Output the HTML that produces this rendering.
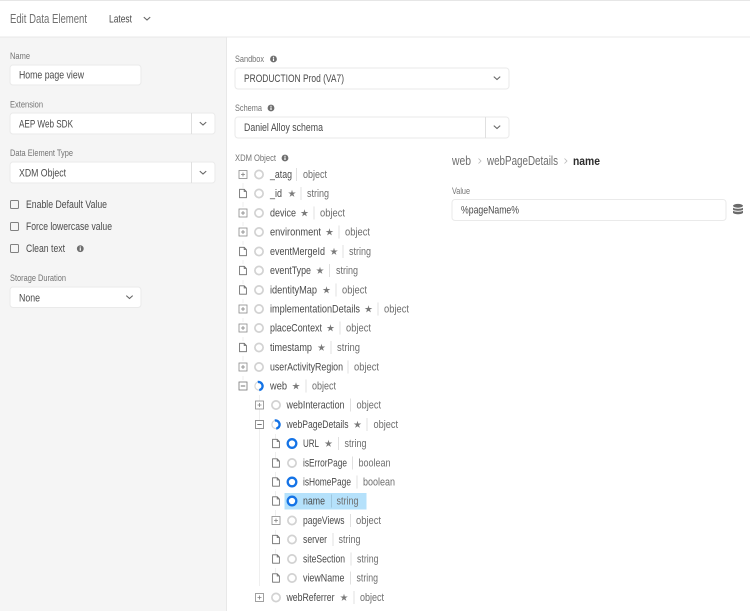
<!DOCTYPE html>
<html><head><meta charset="utf-8"><style>
html,body{margin:0;padding:0;background:#fff;width:750px;height:611px;overflow:hidden}
svg{display:block;filter:blur(.35px)}
text{font-family:"Liberation Sans",sans-serif}
.l{font-size:9.2px;fill:#747474}
.v{font-size:11.4px;fill:#4b4b4b}
.n{font-size:11.4px;fill:#4b4b4b}
.t{font-size:11.4px;fill:#6e6e6e}
.f{fill:#fff;stroke:#eaeaea;stroke-width:1}
.d{stroke:#e0e0e0;stroke-width:1}
</style></head><body>
<svg xmlns="http://www.w3.org/2000/svg" width="750" height="611" viewBox="0 0 750 611">
<defs>
<g id="plus"><rect x="-4" y="-4" width="8" height="8" fill="#fff" stroke="#8a8a8a" stroke-width=".8"/><path d="M-2 0H2M0-2V2" stroke="#808080" stroke-width=".8"/></g>
<g id="minus"><rect x="-4" y="-4" width="8" height="8" fill="#fff" stroke="#777" stroke-width=".8"/><path d="M-2.2 0H2.2" stroke="#666" stroke-width=".9"/></g>
<g id="file"><path d="M-3.4-4.2H1.2L3.4-2V4.2H-3.4Z M1.2-4.2V-2H3.4" fill="#fff" stroke="#6a6a6a" stroke-width=".85"/></g>
<circle id="o" r="4.1" fill="#fff" stroke="#d2d2d2" stroke-width="1.7"/>
<circle id="b" r="4.3" fill="#fff" stroke="#1473e6" stroke-width="2.3"/>
<g id="h"><circle r="4.1" fill="#fff" stroke="#d8d8d8" stroke-width="1.2"/><path d="M-.5-4.1A4.1 4.1 0 0 1 -.5 4.1" transform="rotate(-10)" fill="none" stroke="#1473e6" stroke-width="2.4"/></g>
<path id="s" d="M0-3.8L.8-1L3.8-1L1.4 .6L2.4 3.4L0 1.7L-2.4 3.4L-1.4 .6L-3.8-1L-.8-1Z" fill="#7a7a7a"/>
<g id="i"><circle r="3.4" fill="#6e6e6e"/><rect x="-.6" y="-.6" width="1.2" height="2.6" fill="#fff"/><rect x="-.6" y="-2.2" width="1.2" height="1.1" fill="#fff"/></g>
<path id="c" d="M-3.2-1.4L0 1.5L3.2-1.4" fill="none" stroke="#666" stroke-width="1.1"/>
</defs>

<rect width="750" height="611" fill="#fff"/>
<rect x="0" y="0" width="750" height="1" fill="#e6e6e6"/>
<rect x="0" y="37" width="226" height="574" fill="#f5f5f5"/>
<rect x="226" y="37" width="1" height="574" fill="#e8e8e8"/>
<rect x="0" y="36.5" width="750" height="1" fill="#e8e8e8"/>

<text x="10" y="23" font-size="13" fill="#707070" textLength="77" lengthAdjust="spacingAndGlyphs">Edit Data Element</text>
<text x="109" y="22.5" font-size="11" fill="#4b4b4b" textLength="23" lengthAdjust="spacingAndGlyphs">Latest</text>
<use href="#c" x="147" y="18.5"/>

<text class="l" x="10" y="59" textLength="20" lengthAdjust="spacingAndGlyphs">Name</text>
<rect class="f" x="10" y="65" width="131" height="20" rx="3"/>
<text class="v" x="19" y="78.5" textLength="65" lengthAdjust="spacingAndGlyphs">Home page view</text>

<text class="l" x="10" y="107.5" textLength="33" lengthAdjust="spacingAndGlyphs">Extension</text>
<rect class="f" x="10" y="113" width="205" height="21" rx="3"/>
<path class="d" d="M191.5 113V134"/>
<text class="v" x="19" y="127.5" textLength="54" lengthAdjust="spacingAndGlyphs">AEP Web SDK</text>
<use href="#c" x="203" y="123.5"/>

<text class="l" x="10" y="156" textLength="63" lengthAdjust="spacingAndGlyphs">Data Element Type</text>
<rect class="f" x="10" y="162" width="205" height="21" rx="3"/>
<path class="d" d="M191.5 162V183"/>
<text class="v" x="19" y="176.5" textLength="47" lengthAdjust="spacingAndGlyphs">XDM Object</text>
<use href="#c" x="203" y="172.5"/>

<rect x="10.5" y="200.5" width="8" height="8" rx="1" fill="#f5f5f5" stroke="#808080" stroke-width="1"/>
<text class="v" x="26" y="208" textLength="81" lengthAdjust="spacingAndGlyphs">Enable Default Value</text>
<rect x="10.5" y="222.5" width="8" height="8" rx="1" fill="#f5f5f5" stroke="#808080" stroke-width="1"/>
<text class="v" x="26" y="230" textLength="86" lengthAdjust="spacingAndGlyphs">Force lowercase value</text>
<rect x="10.5" y="244.5" width="8" height="8" rx="1" fill="#f5f5f5" stroke="#808080" stroke-width="1"/>
<text class="v" x="26" y="252" textLength="39" lengthAdjust="spacingAndGlyphs">Clean text</text>
<use href="#i" x="80.3" y="248.7"/>

<text class="l" x="10" y="281" textLength="56" lengthAdjust="spacingAndGlyphs">Storage Duration</text>
<rect class="f" x="10" y="287" width="131" height="20.5" rx="3"/>
<text class="v" x="19" y="301.5" textLength="21" lengthAdjust="spacingAndGlyphs">None</text>
<use href="#c" x="129.5" y="297"/>

<text class="l" x="235" y="62" textLength="29" lengthAdjust="spacingAndGlyphs">Sandbox</text>
<use href="#i" x="273.5" y="59"/>
<rect class="f" x="235" y="68" width="274" height="21" rx="3"/>
<text class="v" x="244" y="82" textLength="100" lengthAdjust="spacingAndGlyphs">PRODUCTION Prod (VA7)</text>
<use href="#c" x="497" y="78"/>

<text class="l" x="235" y="111" textLength="27" lengthAdjust="spacingAndGlyphs">Schema</text>
<use href="#i" x="271" y="108"/>
<rect class="f" x="235" y="117" width="274" height="21" rx="3"/>
<path class="d" d="M485.5 117V138"/>
<text class="v" x="244" y="131" textLength="79" lengthAdjust="spacingAndGlyphs">Daniel Alloy schema</text>
<use href="#c" x="497" y="127"/>

<text class="l" x="235" y="161" textLength="41" lengthAdjust="spacingAndGlyphs">XDM Object</text>
<use href="#i" x="285" y="158"/>

<text x="452" y="165" font-size="12.5" fill="#6e6e6e" textLength="19" lengthAdjust="spacingAndGlyphs">web</text>
<path d="M478.5 158.5L481 161L478.5 163.5" fill="none" stroke="#b8b8b8" stroke-width=".8"/>
<text x="487" y="165" font-size="12.5" fill="#6e6e6e" textLength="71" lengthAdjust="spacingAndGlyphs">webPageDetails</text>
<path d="M564.5 158.500L567 161L564.5 163.5" fill="none" stroke="#b8b8b8" stroke-width=".8"/>
<text x="573" y="165" font-size="12" font-weight="bold" fill="#2c2c2c" textLength="27" lengthAdjust="spacingAndGlyphs">name</text>

<text class="l" x="452" y="194" textLength="18" lengthAdjust="spacingAndGlyphs">Value</text>
<rect class="f" x="452" y="199.5" width="274" height="21" rx="3"/>
<text class="v" x="461" y="213.5" textLength="58" lengthAdjust="spacingAndGlyphs">%pageName%</text>
<g fill="#6a6a6a"><ellipse cx="738" cy="205.8" rx="5" ry="1.9"/><path d="M733 207.600c1 1.500 9 1.500 10 0v2c-1 1.500-9 1.500-10 0z"/><path d="M733 210.600c1 1.500 9 1.500 10 0v2.200c-1 2-9 2-10 0z"/></g>

<!-- tree guides -->
<path d="M259.5 395V586M275.500 434V440M275.500 452V458M275.500 472V478M275.500 491V497M275.500 510V516M275.500 530V535M275.500 549V554M275.500 568V573M243 183V188M243 202V207M243 222V226M243 241V245M243 260V264M243 280V284M243 299V303M243 318V322M243 337V341M243 356V361M243 376V380" stroke="#efefef" stroke-width="1" fill="none"/>

<!-- highlight -->
<rect x="284.5" y="493" width="82" height="16.5" fill="#b5e1fb"/>

<!-- rows -->
<use href="#plus" x="243" y="174.5"/><use href="#o" x="259" y="174.5"/><text class="n" x="270" y="178" textLength="22" lengthAdjust="spacingAndGlyphs">_atag</text><path class="d" d="M296.5 168V181"/><text class="t" x="303" y="178" textLength="24" lengthAdjust="spacingAndGlyphs">object</text>

<use href="#file" x="243" y="193.5"/><use href="#o" x="259" y="193.5"/><text class="n" x="270" y="197" textLength="12" lengthAdjust="spacingAndGlyphs">_id</text><use href="#s" x="292" y="193.5"/><path class="d" d="M301 187V200"/><text class="t" x="307" y="197" textLength="22" lengthAdjust="spacingAndGlyphs">string</text>

<use href="#plus" x="243" y="213"/><use href="#o" x="259" y="213"/><text class="n" x="270" y="216.5" textLength="26" lengthAdjust="spacingAndGlyphs">device</text><use href="#s" x="304.5" y="213"/><path class="d" d="M314 206.5V219.5"/><text class="t" x="320" y="216.5" textLength="25" lengthAdjust="spacingAndGlyphs">object</text>

<use href="#plus" x="243" y="232"/><use href="#o" x="259" y="232"/><text class="n" x="270" y="235.5" textLength="51" lengthAdjust="spacingAndGlyphs">environment</text><use href="#s" x="329.5" y="232"/><path class="d" d="M339 225.5V238.5"/><text class="t" x="345" y="235.5" textLength="25" lengthAdjust="spacingAndGlyphs">object</text>

<use href="#file" x="243" y="251.5"/><use href="#o" x="259" y="251.5"/><text class="n" x="270" y="255" textLength="55" lengthAdjust="spacingAndGlyphs">eventMergeId</text><use href="#s" x="334" y="251.5"/><path class="d" d="M343 245V258"/><text class="t" x="349" y="255" textLength="22" lengthAdjust="spacingAndGlyphs">string</text>

<use href="#file" x="243" y="270.5"/><use href="#o" x="259" y="270.5"/><text class="n" x="270" y="274" textLength="41" lengthAdjust="spacingAndGlyphs">eventType</text><use href="#s" x="320" y="270.5"/><path class="d" d="M329.5 264V277"/><text class="t" x="336" y="274" textLength="22" lengthAdjust="spacingAndGlyphs">string</text>

<use href="#file" x="243" y="290"/><use href="#o" x="259" y="290"/><text class="n" x="270" y="293.5" textLength="47" lengthAdjust="spacingAndGlyphs">identityMap</text><use href="#s" x="326.5" y="290"/><path class="d" d="M336 283.5V296.5"/><text class="t" x="342" y="293.5" textLength="25" lengthAdjust="spacingAndGlyphs">object</text>

<use href="#plus" x="243" y="309"/><use href="#o" x="259" y="309"/><text class="n" x="270" y="312.5" textLength="90" lengthAdjust="spacingAndGlyphs">implementationDetails</text><use href="#s" x="368.5" y="309"/><path class="d" d="M378 302.5V315.5"/><text class="t" x="384" y="312.5" textLength="25" lengthAdjust="spacingAndGlyphs">object</text>

<use href="#plus" x="243" y="328"/><use href="#o" x="259" y="328"/><text class="n" x="270" y="331.5" textLength="52" lengthAdjust="spacingAndGlyphs">placeContext</text><use href="#s" x="330.5" y="328"/><path class="d" d="M340 321.5V334.5"/><text class="t" x="346" y="331.5" textLength="25" lengthAdjust="spacingAndGlyphs">object</text>

<use href="#file" x="243" y="347.5"/><use href="#o" x="259" y="347.5"/><text class="n" x="270" y="351" textLength="42" lengthAdjust="spacingAndGlyphs">timestamp</text><use href="#s" x="321.5" y="347.5"/><path class="d" d="M331 341V354"/><text class="t" x="337" y="351" textLength="23" lengthAdjust="spacingAndGlyphs">string</text>

<use href="#plus" x="243" y="367"/><use href="#o" x="259" y="367"/><text class="n" x="270" y="370.5" textLength="73" lengthAdjust="spacingAndGlyphs">userActivityRegion</text><path class="d" d="M348 360.5V373.5"/><text class="t" x="354" y="370.5" textLength="25" lengthAdjust="spacingAndGlyphs">object</text>

<use href="#minus" x="243" y="386"/><use href="#h" x="259" y="386"/><text class="n" x="270" y="389.5" textLength="17" lengthAdjust="spacingAndGlyphs">web</text><use href="#s" x="296" y="386"/><path class="d" d="M306 379.5V392.5"/><text class="t" x="312" y="389.5" textLength="24" lengthAdjust="spacingAndGlyphs">object</text>

<use href="#plus" x="259.5" y="405"/><use href="#o" x="276" y="405"/><text class="n" x="286.5" y="408.5" textLength="58" lengthAdjust="spacingAndGlyphs">webInteraction</text><path class="d" d="M350.5 398.5V411.5"/><text class="t" x="356.5" y="408.5" textLength="24.5" lengthAdjust="spacingAndGlyphs">object</text>

<use href="#minus" x="259.5" y="424.5"/><use href="#h" x="276" y="424.5"/><text class="n" x="286.5" y="428" textLength="62" lengthAdjust="spacingAndGlyphs">webPageDetails</text><use href="#s" x="357.5" y="424.5"/><path class="d" d="M367 418V431"/><text class="t" x="373.5" y="428" textLength="24.5" lengthAdjust="spacingAndGlyphs">object</text>

<use href="#file" x="276" y="443.5"/><use href="#b" x="292" y="443.5"/><text class="n" x="303" y="447" textLength="16" lengthAdjust="spacingAndGlyphs">URL</text><use href="#s" x="328.5" y="443.5"/><path class="d" d="M338.5 437V450"/><text class="t" x="344.5" y="447" textLength="22" lengthAdjust="spacingAndGlyphs">string</text>

<use href="#file" x="276" y="463"/><use href="#o" x="292" y="463"/><text class="n" x="303" y="466.5" textLength="44" lengthAdjust="spacingAndGlyphs">isErrorPage</text><path class="d" d="M352.5 456.5V469.5"/><text class="t" x="358.5" y="466.5" textLength="32" lengthAdjust="spacingAndGlyphs">boolean</text>

<use href="#file" x="276" y="482"/><use href="#b" x="292" y="482"/><text class="n" x="303" y="485.5" textLength="48" lengthAdjust="spacingAndGlyphs">isHomePage</text><path class="d" d="M357 475.5V488.5"/><text class="t" x="363" y="485.5" textLength="32" lengthAdjust="spacingAndGlyphs">boolean</text>

<use href="#file" x="276" y="501"/><use href="#b" x="292" y="501"/><text class="n" x="303" y="504.5" textLength="22" lengthAdjust="spacingAndGlyphs">name</text><path d="M331.5 494.5V507.5" stroke="#9fc6dd" stroke-width="1"/><text class="t" x="336.5" y="504.5" textLength="22" lengthAdjust="spacingAndGlyphs">string</text>

<use href="#plus" x="276" y="520.5"/><use href="#o" x="292" y="520.5"/><text class="n" x="303" y="524" textLength="41.5" lengthAdjust="spacingAndGlyphs">pageViews</text><path class="d" d="M350.5 514V527"/><text class="t" x="356" y="524" textLength="25" lengthAdjust="spacingAndGlyphs">object</text>

<use href="#file" x="276" y="539.5"/><use href="#o" x="292" y="539.5"/><text class="n" x="303" y="543" textLength="24" lengthAdjust="spacingAndGlyphs">server</text><path class="d" d="M333 533V546"/><text class="t" x="338.5" y="543" textLength="22" lengthAdjust="spacingAndGlyphs">string</text>

<use href="#file" x="276" y="559"/><use href="#o" x="292" y="559"/><text class="n" x="303" y="562.5" textLength="42" lengthAdjust="spacingAndGlyphs">siteSection</text><path class="d" d="M351 552.5V565.5"/><text class="t" x="357" y="562.5" textLength="21.5" lengthAdjust="spacingAndGlyphs">string</text>

<use href="#file" x="276" y="578"/><use href="#o" x="292" y="578"/><text class="n" x="303" y="581.5" textLength="41.5" lengthAdjust="spacingAndGlyphs">viewName</text><path class="d" d="M350.5 571.5V584.5"/><text class="t" x="356.5" y="581.5" textLength="21.5" lengthAdjust="spacingAndGlyphs">string</text>

<use href="#plus" x="259.5" y="597.5"/><use href="#o" x="276" y="597.5"/><text class="n" x="286.5" y="601" textLength="48" lengthAdjust="spacingAndGlyphs">webReferrer</text><use href="#s" x="344" y="597.5"/><path class="d" d="M354 591V604"/><text class="t" x="360" y="601" textLength="24" lengthAdjust="spacingAndGlyphs">object</text>
</svg>
</body></html>
